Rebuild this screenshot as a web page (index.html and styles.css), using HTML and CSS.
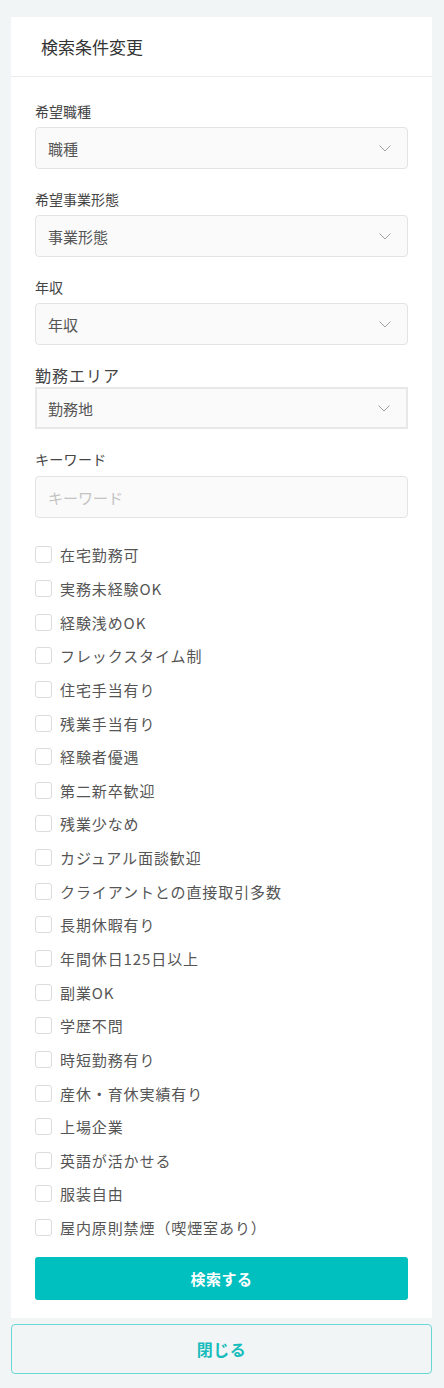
FILE: index.html
```html
<!DOCTYPE html>
<html lang="ja">
<head>
<meta charset="utf-8">
<link rel="stylesheet" href="styles.css">
</head>
<body>
<div class="card">
  <div class="card-head">検索条件変更</div>
  <div class="card-body">
    <div class="field">
      <div class="label">希望職種</div>
      <div class="select"><span>職種</span><svg class="chev" width="12" height="7" viewBox="0 0 12 7"><path d="M0.5 0.5 L6 6 L11.5 0.5" fill="none" stroke="#a0a0a0" stroke-width="1"/></svg></div>
    </div>
    <div class="field">
      <div class="label">希望事業形態</div>
      <div class="select"><span>事業形態</span><svg class="chev" width="12" height="7" viewBox="0 0 12 7"><path d="M0.5 0.5 L6 6 L11.5 0.5" fill="none" stroke="#a0a0a0" stroke-width="1"/></svg></div>
    </div>
    <div class="field">
      <div class="label">年収</div>
      <div class="select"><span>年収</span><svg class="chev" width="12" height="7" viewBox="0 0 12 7"><path d="M0.5 0.5 L6 6 L11.5 0.5" fill="none" stroke="#a0a0a0" stroke-width="1"/></svg></div>
    </div>
    <div class="field">
      <div class="label label-lg">勤務エリア</div>
      <div class="select select-sq"><span>勤務地</span><svg class="chev" width="12" height="7" viewBox="0 0 12 7"><path d="M0.5 0.5 L6 6 L11.5 0.5" fill="none" stroke="#a0a0a0" stroke-width="1"/></svg></div>
    </div>
    <div class="field">
      <div class="label label-kw">キーワード</div>
      <div class="input"><span class="ph">キーワード</span></div>
    </div>
    <ul class="checks">
      <li><span class="box"></span>在宅勤務可</li>
      <li><span class="box"></span>実務未経験OK</li>
      <li><span class="box"></span>経験浅めOK</li>
      <li><span class="box"></span>フレックスタイム制</li>
      <li><span class="box"></span>住宅手当有り</li>
      <li><span class="box"></span>残業手当有り</li>
      <li><span class="box"></span>経験者優遇</li>
      <li><span class="box"></span>第二新卒歓迎</li>
      <li><span class="box"></span>残業少なめ</li>
      <li><span class="box"></span>カジュアル面談歓迎</li>
      <li><span class="box"></span>クライアントとの直接取引多数</li>
      <li><span class="box"></span>長期休暇有り</li>
      <li><span class="box"></span>年間休日125日以上</li>
      <li><span class="box"></span>副業OK</li>
      <li><span class="box"></span>学歴不問</li>
      <li><span class="box"></span>時短勤務有り</li>
      <li><span class="box"></span>産休・育休実績有り</li>
      <li><span class="box"></span>上場企業</li>
      <li><span class="box"></span>英語が活かせる</li>
      <li><span class="box"></span>服装自由</li>
      <li><span class="box"></span>屋内原則禁煙（喫煙室あり）</li>
    </ul>
    <div class="btn-search">検索する</div>
  </div>
</div>
<div class="btn-close">閉じる</div>
</body>
</html>
```

FILE: styles.css
```css
* { box-sizing: border-box; }
html, body { margin: 0; padding: 0; }
body {
  background: #f2f5f6;
  padding: 17px 12px 0 11px;
  font-family: "Noto Sans CJK JP", "Noto Sans", sans-serif;
  color: #555;
}
.card {
  background: #fff;
}
.card-head {
  height: 60px;
  border-bottom: 1px solid #ececec;
  padding-left: 30px;
  display: flex;
  align-items: center;
  font-size: 17px;
  color: #333;
  padding-bottom: 1px;
}
.card-body {
  padding: 24px 24px 18px 24px;
}
.field { margin-bottom: 20px; }
.field:last-of-type { margin-bottom: 0; }
.label {
  font-size: 14px;
  line-height: 20px;
  color: #444;
  margin-bottom: 6px;
}
.label-lg {
  font-size: 16px;
  letter-spacing: 1px;
  margin-bottom: 2px;
}
.label-kw { margin-bottom: 7px; letter-spacing: 0.3px; }
.select, .input {
  height: 42px;
  border: 1px solid #e3e3e3;
  border-radius: 4px;
  background: #fafafa;
  display: flex;
  align-items: center;
  justify-content: space-between;
  padding: 0 16px 0 12px;
  font-size: 15px;
  color: #555;
}
.select-sq {
  border-radius: 0;
  border: 2px solid #e8e8e8;
  padding-left: 11px;
}
.chev { margin-top: 1px; }
.ph { color: #c4c4c4; }
.checks {
  list-style: none;
  margin: 17px 0 13px 0;
  padding: 0;
}
.checks li {
  height: 33.65px;
  display: flex;
  align-items: center;
  font-size: 15px;
  letter-spacing: 0.9px;
  color: #555;
}
.box {
  width: 17px;
  height: 17px;
  border: 1px solid #dcdcdc;
  border-radius: 3px;
  background: #fff;
  margin-right: 8px;
  flex: none;
}
.btn-search {
  height: 43px;
  background: #00bfbf;
  border-radius: 3px;
  color: #fff;
  font-weight: bold;
  font-size: 15px;
  letter-spacing: 0.5px;
  display: flex;
  align-items: center;
  justify-content: center;
}
.btn-close {
  margin-top: 6px;
  height: 50px;
  border: 1px solid #6ad6d6;
  border-radius: 4px;
  background: #f2f5f6;
  color: #17bcbc;
  font-weight: bold;
  font-size: 16px;
  letter-spacing: 0.5px;
  display: flex;
  align-items: center;
  justify-content: center;
}
```
